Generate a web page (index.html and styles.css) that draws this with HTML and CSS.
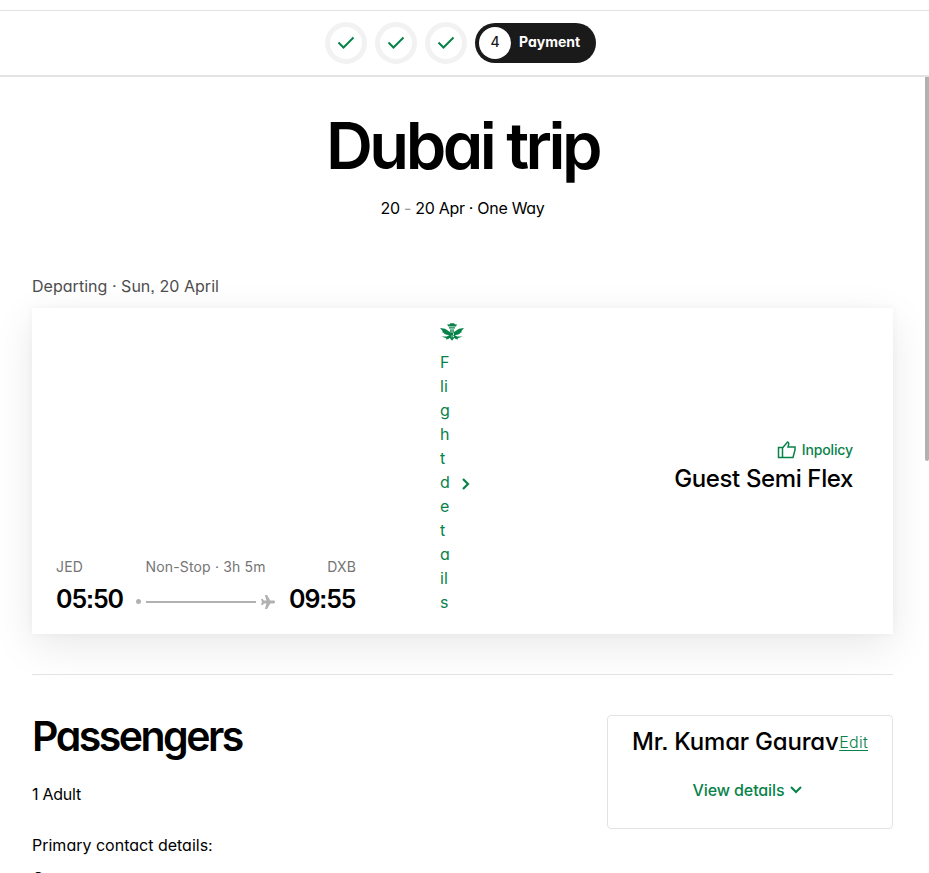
FILE: index.html
```html
<!DOCTYPE html>
<html lang="en">
<head>
<meta charset="utf-8">
<title>Dubai trip</title>
<link rel="stylesheet" href="styles.css">
</head>
<body>
<header class="steps">
  <span class="step"><svg viewBox="0 0 18 14"><path d="M1.5 6.5 6.5 11.5 16.5 1.5"/></svg></span>
  <span class="step"><svg viewBox="0 0 18 14"><path d="M1.5 6.5 6.5 11.5 16.5 1.5"/></svg></span>
  <span class="step"><svg viewBox="0 0 18 14"><path d="M1.5 6.5 6.5 11.5 16.5 1.5"/></svg></span>
  <span class="current"><span class="number">4</span><span class="current-label">Payment</span></span>
</header>
<div class="viewport">
  <main>
    <h1><span>Dubai trip</span></h1>
    <p class="dates"><span>20 <i>-</i> 20 Apr · One Way</span></p>
    <p class="departing"><span>Departing · Sun, 20 April</span></p>
    <section class="flight">
      <div class="route">
        <div class="places"><span class="jed">JED</span><span class="stops">Non-Stop · 3h 5m</span><span class="dxb">DXB</span></div>
        <div class="times">
          <strong>05:50</strong>
          <span class="dot"></span><span class="line"></span>
          <svg class="plane" viewBox="0 0 14 14"><path d="M14 7c0-.9-.6-1.400-1.400-1.400H9.300L6 0H3.900L5.400 5.600H3L1.600 3.900H0L.9 7 0 10.100h1.600L3 8.400h2.400L3.900 14H6l3.300-5.600h3.300c.8 0 1.400-.5 1.400-1.400z"/></svg>
          <strong>09:55</strong>
        </div>
      </div>
      <div class="details">
        <svg class="emblem" viewBox="0 0 24 18"><path d="M7 1.500 10 1.200V.2h4.500v1l2.500.3-1 2H8.500zM9 4.300h6v1.200H9zM0 5l5 .8 5 3.200 1 2.800-1.500.8L4.500 11l-.5-1-1.800-.8.5-.9zM24 5l-5 .8-5 3.200-1 2.800 1.500.8L19.500 11l.5-1 1.800-.8-.5-.9zM1.500 13.500h5.200l3-1.200 1.500 1L8.500 16l-2.600.5.5-1.300zM22.500 13.500h-5.200l-3-1.200-1.500 1 2.700 2.700 2.600.5-.5-1.300zM10 6.500h4v8.800l-2 2.500-2-2.500z"/><path class="mark" d="M11.100 7v3M12.900 7v3M12 12v2.500"/></svg>
        <div class="details-link"><span class="letters">Flight details</span><svg class="chevron" viewBox="0 0 8 12"><path d="M1 1 6 6 1 11"/></svg></div>
      </div>
      <div class="fare">
        <div class="policy"><svg viewBox="0 0 20 18"><path d="M1.500 6.500h4v10h-4zM5.500 7l5-6c1.500.5 1.500 2 1 3L11 6h7v3l-2 7.500H5.500z"/></svg><span>Inpolicy</span></div>
        <div class="fare-name"><span>Guest Semi Flex</span></div>
      </div>
    </section>
    <section class="passengers">
      <div>
        <h2><span>Passengers</span></h2>
        <p class="adult"><span>1 Adult</span></p>
        <p class="contact"><span>Primary contact details:</span></p>
        <p class="contact-name">Gaurav</p>
      </div>
      <div class="person">
        <div class="person-name"><strong>Mr. Kumar Gaurav</strong><a>Edit</a></div>
        <div class="view"><span>View details</span><svg viewBox="0 0 12 8"><path d="M1 1 6 6 11 1"/></svg></div>
      </div>
    </section>
  </main>
  <div class="thumb"></div>
</div>
</body>
</html>
```
FILE: styles.css
```css
* { box-sizing: border-box; }
html, body { height: 100%; }
body { margin: 0; padding-top: 10px; overflow: hidden; display: flex; flex-direction: column; background: #fff; color: #000; font: 16px/24px Inter, "Liberation Sans", sans-serif; font-feature-settings: "cv11", "ss07"; }
h1, h2, p { margin: 0; white-space: nowrap; }
svg { fill: none; flex: none; }
.steps { flex: none; height: 67px; border-top: 1px solid #e3e3e3; border-bottom: 2px solid #e3e3e3; display: flex; justify-content: center; align-items: center; gap: 8px; padding-right: 8px; }
.step { width: 42px; height: 42px; border: 5px solid #f2f2f2; border-radius: 50%; display: flex; align-items: center; justify-content: center; }
.step svg { width: 18px; height: 14px; stroke: #078249; stroke-width: 2; }
.current { width: 121px; height: 40px; border-radius: 20px; background: #1a1a1a; display: flex; align-items: center; padding-left: 4px; gap: 8px; color: #fff; }
.number { width: 32px; height: 32px; border-radius: 50%; background: #fff; color: #1a1a1a; text-align: center; line-height: 30px; font-size: 14px; font-weight: 500; }
.current-label { font-size: 14px; font-weight: 700; padding-bottom: 2px; }
.viewport { flex: 1; min-height: 0; display: flex; overflow: hidden; }
main { width: 925px; flex: none; padding: 29px 32px 0; }
.thumb { width: 4px; height: 384px; background: #b1b1b1; border-radius: 0 0 2px 2px; }
h1 { text-align: center; font-size: 65px; line-height: 80px; font-weight: 600; letter-spacing: -3.5px; }
.dates { margin-top: 10px; text-align: center; letter-spacing: -.3px; }
.dates i { font-style: normal; color: #999; }
.departing { margin-top: 54px; color: #4d4d4d; letter-spacing: .03px; }
.flight { margin-top: 10px; height: 326px; background: #fff; box-shadow: 0 12px 40px rgba(0,0,0,.09), 0 0 8px rgba(0,0,0,.04); display: flex; padding: 15px 40px 16px 24px; }
.route { width: 300px; align-self: flex-end; padding-bottom: 6px; }
.places { display: flex; justify-content: space-between; color: #757575; font-size: 14px; line-height: 20px; margin-bottom: 9px; letter-spacing: .15px; }
.stops { padding-left: 1px; }
.times { display: flex; align-items: center; height: 26px; }
.times strong { font-size: 25px; line-height: 26px; font-weight: 600; width: 67px; white-space: nowrap; letter-spacing: -1.1px; }
.dot { width: 5px; height: 5px; border-radius: 50%; background: #b1b1b1; margin: 5px 5px 0 13px; }
.line { width: 110px; height: 2px; background: #b1b1b1; margin-top: 5px; }
.plane { width: 14px; height: 14px; fill: #b1b1b1; margin: 5px 14px 0 5px; }
.details { width: 30px; margin-left: 84px; color: #078249; }
.emblem { display: block; width: 24px; height: 18px; fill: #078249; }
.mark { stroke: #fff; stroke-width: .6; }
.details-link { display: flex; align-items: center; margin-top: 9px; }
.letters { width: 10px; word-break: break-all; }
.chevron { width: 8px; height: 12px; margin-left: 12px; stroke: #078249; stroke-width: 2.2; margin-top: 4px; }
.fare { margin-left: auto; margin-top: 117px; text-align: right; white-space: nowrap; }
.policy { display: flex; justify-content: flex-end; align-items: center; height: 20px; gap: 5px; color: #078249; font-size: 14px; font-weight: 500; letter-spacing: -.12px; }
.policy svg { width: 20px; height: 18px; stroke: #078249; stroke-width: 1.5; }
.fare-name { font-size: 24px; line-height: 34px; font-weight: 500; letter-spacing: -.38px; margin-top: 2px; }
.passengers { margin-top: 40px; border-top: 1px solid #e3e3e3; display: flex; justify-content: space-between; padding-top: 40px; }
h2 { font-size: 41px; line-height: 48px; margin-top: -3px; font-weight: 600; letter-spacing: -2.5px; }
.adult { margin-top: 22px; letter-spacing: -.25px; }
.contact { margin-top: 27px; }
.contact-name { margin-top: 9px; }
.person { width: 286px; height: 114px; border: 1px solid #e3e3e3; border-radius: 4px; padding: 10px 24px 0; white-space: nowrap; }
.person-name { height: 32px; display: flex; justify-content: space-between; align-items: center; }
.person-name strong { font-size: 24px; font-weight: 500; width: 206px; letter-spacing: -.2px; }
.person-name a { color: #078249; text-decoration: underline; text-underline-offset: 2px; font-weight: 300; letter-spacing: .3px; }
.view { margin-top: 20px; padding-right: 6px; display: flex; align-items: center; justify-content: center; gap: 5px; color: #078249; font-weight: 500; letter-spacing: -.1px; }
.view svg { width: 12px; height: 8px; stroke: #078249; stroke-width: 2; }
```
